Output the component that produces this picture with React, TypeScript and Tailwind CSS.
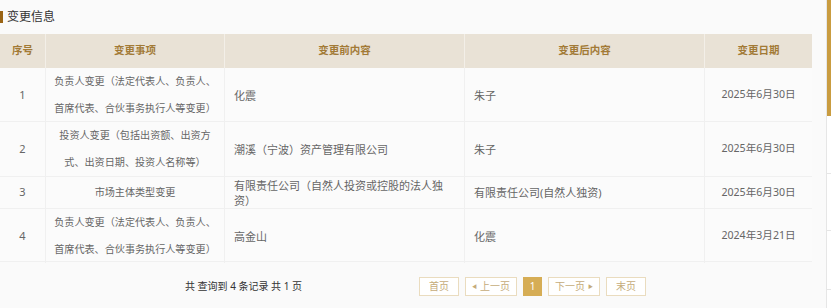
const FONT = { fontFamily: '"Noto Sans", "Noto Sans CJK SC", sans-serif' };

type ChangeRow = {
  id: number;
  item: string[];
  before: string;
  after: string;
  date: string;
  h: string;
};

const ROWS: ChangeRow[] = [
  {
    id: 1,
    item: ["负责人变更（法定代表人、负责人、", "首席代表、合伙事务执行人等变更）"],
    before: "化震",
    after: "朱子",
    date: "2025年6月30日",
    h: "h-[54px]",
  },
  {
    id: 2,
    item: ["投资人变更（包括出资额、出资方", "式、出资日期、投资人名称等）"],
    before: "潮溪（宁波）资产管理有限公司",
    after: "朱子",
    date: "2025年6月30日",
    h: "h-[55px]",
  },
  {
    id: 3,
    item: ["市场主体类型变更"],
    before: "有限责任公司（自然人投资或控股的法人独资）",
    after: "有限责任公司(自然人独资)",
    date: "2025年6月30日",
    h: "h-[32px]",
  },
  {
    id: 4,
    item: ["负责人变更（法定代表人、负责人、", "首席代表、合伙事务执行人等变更）"],
    before: "高金山",
    after: "化震",
    date: "2024年3月21日",
    h: "h-[53px]",
  },
];

const COLS = "grid grid-cols-[46px_179px_240px_240px_107px]";

function PageButton({ children, active, narrow }: { children: React.ReactNode; active?: boolean; narrow?: boolean }) {
  if (active) {
    return (
      <span className="flex h-[19px] w-[19px] items-center justify-center bg-[#d6ad55] text-[10px] text-white">
        {children}
      </span>
    );
  }
  return (
    <span
      className={`flex h-[19px] items-center justify-center gap-[3px] border border-[#eadcbf] bg-white text-[10px] text-[#c5ab7a] ${
        narrow ? "px-[6px]" : "px-[9px]"
      }`}
    >
      {children}
    </span>
  );
}

export default function App() {
  return (
    <div className="relative h-[308px] w-[831px] overflow-hidden bg-[#fafafa] text-[#666]" style={FONT}>
      <div className="flex h-[34px] items-center gap-[4px]">
        <span className="h-[12px] w-[3px] bg-[#9a6414]" />
        <span className="text-[12px] text-[#333]">变更信息</span>
      </div>

      <div className="w-[812px]">
        <div className={`${COLS} h-[34px] bg-[#e9e2d6] text-[10.5px] font-bold text-[#a27a36]`}>
          <div className="flex items-center justify-center border-r border-[#f3efe8]">序号</div>
          <div className="flex items-center justify-center border-r border-[#f3efe8]">变更事项</div>
          <div className="flex items-center justify-center border-r border-[#f3efe8]">变更前内容</div>
          <div className="flex items-center justify-center border-r border-[#f3efe8]">变更后内容</div>
          <div className="flex items-center justify-center">变更日期</div>
        </div>

        {ROWS.map((row) => (
          <div key={row.id} className={`${COLS} ${row.h} border-b border-[#f0f0f0] bg-[#fbfbfb] text-[11px]`}>
            <div className="flex items-center justify-center border-r border-[#f0f0f0]">{row.id}</div>
            <div className="flex flex-col items-center justify-center border-r border-[#f0f0f0] text-[10.1px] leading-[27px]">
              {row.item.map((line) => (
                <span key={line} className="whitespace-nowrap">
                  {line}
                </span>
              ))}
            </div>
            <div className="flex items-center border-r border-[#f0f0f0] pl-[9px] pr-[14px] leading-[15px]">
              {row.before}
            </div>
            <div className="flex items-center border-r border-[#f0f0f0] pl-[9px] pr-[14px] leading-[15px]">
              {row.after}
            </div>
            <div className="flex items-center justify-center text-[10.6px]">{row.date}</div>
          </div>
        ))}

        <div className="flex h-[49px] items-center">
          <span className="ml-[185px] text-[10px] text-[#333]">共 查询到 4 条记录 共 1 页</span>
          <div className="ml-[117px] flex items-center gap-[6px]">
            <PageButton>首页</PageButton>
            <PageButton narrow>
              <span className="text-[5px]">◀</span>上一页
            </PageButton>
            <PageButton active>1</PageButton>
            <PageButton narrow>
              下一页<span className="text-[5px]">▶</span>
            </PageButton>
            <PageButton>末页</PageButton>
          </div>
        </div>
      </div>

      {/* edge of the floating side panel */}
      <div className="absolute right-0 top-0 flex h-full w-[5px] flex-col border-l border-[#e6e6e6] bg-white">
        <div className="h-[116px] bg-[#c99c40]" />
        <div className="h-[58px] border-b border-[#e6e6e6]" />
        <div className="h-[57px] border-b border-[#e6e6e6]" />
        <div className="h-[59px] border-b border-[#e6e6e6]" />
      </div>
    </div>
  );
}
